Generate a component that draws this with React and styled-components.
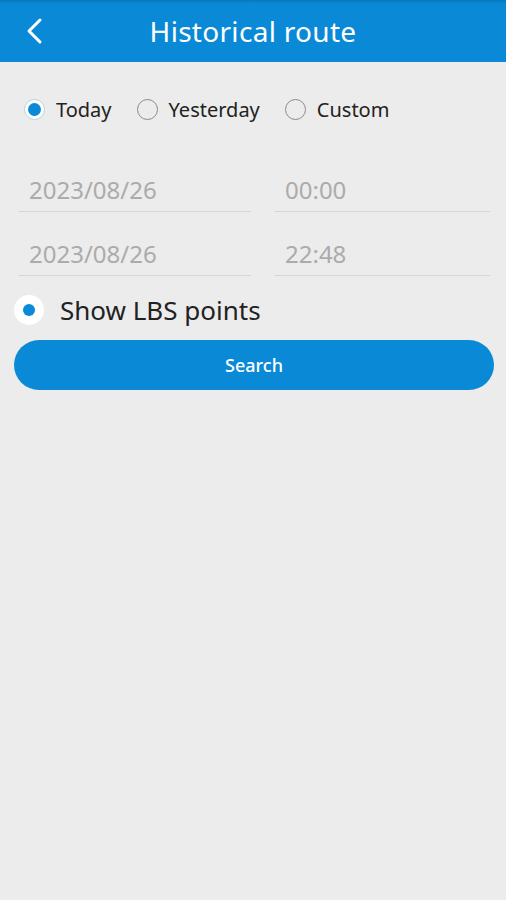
import React from "react";
import styled, { createGlobalStyle } from "styled-components";

const Global = createGlobalStyle`
  html, body {
    margin: 0;
    padding: 0;
    background: #ececec;
  }
  body {
    font-family: "Noto Sans", "Open Sans", sans-serif;
  }
`;

export default function App() {
  return (
    <Page>
      <Global />
      <Header>
        <Back>
          <svg width="18" height="28" viewBox="0 0 18 28">
            <path d="M15 3 L4 14 L15 25" fill="none" stroke="#fff" strokeWidth="3" strokeLinecap="round" strokeLinejoin="round" />
          </svg>
        </Back>
        <Title>Historical route</Title>
      </Header>

      <RadioRow>
        <RadioItem>
          <Radio checked />
          <span>Today</span>
        </RadioItem>
        <RadioItem>
          <Radio />
          <span>Yesterday</span>
        </RadioItem>
        <RadioItem>
          <Radio />
          <span>Custom</span>
        </RadioItem>
      </RadioRow>

      <Fields>
        <Field>2023/08/26</Field>
        <Field>00:00</Field>
        <Field>2023/08/26</Field>
        <Field>22:48</Field>
      </Fields>

      <LbsRow>
        <LbsDot />
        <LbsLabel>Show LBS points</LbsLabel>
      </LbsRow>

      <SearchButton>Search</SearchButton>
    </Page>
  );
}

const Page = styled.div`
  min-height: 900px;
  background: #ececec;
`;

const Header = styled.header`
  position: relative;
  height: 62px;
  background: linear-gradient(#0677bd 0, #0a8ad6 4px);
  display: flex;
  align-items: center;
  justify-content: center;
`;

const Back = styled.div`
  position: absolute;
  left: 25px;
  top: 17px;
  display: flex;
`;

const Title = styled.h1`
  margin: 0;
  color: #fff;
  font-size: 28px;
  font-weight: 400;
  letter-spacing: 0.3px;
`;

const RadioRow = styled.div`
  display: flex;
  align-items: center;
  padding: 34px 0 0 24px;
  gap: 25px;
  height: 26px;
`;

const RadioItem = styled.label`
  display: flex;
  align-items: center;
  gap: 11px;
  font-size: 20px;
  color: #222;
`;

const Radio = styled.span`
  box-sizing: border-box;
  width: 21px;
  height: 21px;
  border-radius: 50%;
  border: 1.5px solid ${(p) => (p.checked ? "#b7d3e6" : "#8a8a8a")};
  background: ${(p) => (p.checked ? "#fff" : "transparent")};
  display: flex;
  align-items: center;
  justify-content: center;
  &::after {
    content: "";
    width: 13px;
    height: 13px;
    border-radius: 50%;
    background: #0a8ad6;
    display: ${(p) => (p.checked ? "block" : "none")};
  }
`;

const Fields = styled.div`
  display: grid;
  grid-template-columns: 232px 215px;
  column-gap: 24px;
  row-gap: 14px;
  padding: 40px 0 0 19px;
`;

const Field = styled.div`
  height: 50px;
  box-sizing: border-box;
  padding: 11px 0 0 10px;
  border-bottom: 1.5px solid #d6d6d6;
  font-size: 24px;
  color: #ababab;
`;

const LbsRow = styled.div`
  display: flex;
  align-items: center;
  padding: 16px 0 0 14px;
  gap: 16px;
`;

const LbsDot = styled.span`
  width: 30px;
  height: 30px;
  border-radius: 50%;
  background: #fff;
  display: flex;
  align-items: center;
  justify-content: center;
  &::after {
    content: "";
    width: 12px;
    height: 12px;
    border-radius: 50%;
    background: #0a8ad6;
  }
`;

const LbsLabel = styled.span`
  font-size: 26px;
  color: #222;
`;

const SearchButton = styled.button`
  display: block;
  margin: 12px 0 0 14px;
  width: 480px;
  height: 50px;
  border: none;
  border-radius: 25px;
  background: #0a8ad6;
  color: #fff;
  font-family: "Noto Sans", "Open Sans", sans-serif;
  font-size: 18px;
  font-weight: 500;
`;
